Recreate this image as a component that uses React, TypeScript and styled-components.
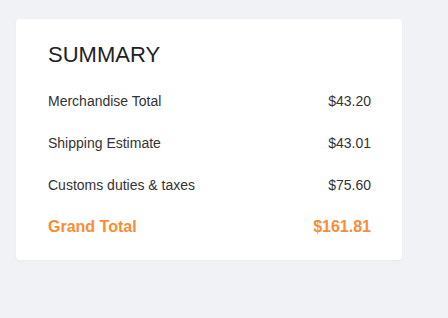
import styled, { createGlobalStyle } from "styled-components";

const GlobalStyle = createGlobalStyle`
  html, body {
    margin: 0;
    padding: 0;
    background: #f0f2f5;
    font-family: "Liberation Sans", Arial, sans-serif;
  }
`

const Page = styled.main`
  width: 448px;
  height: 318px;
  padding: 19px 0 0 16px;
  box-sizing: border-box;
`

const Card = styled.section`
  width: 386px;
  box-sizing: border-box;
  padding: 25px 31px 23px 32px;
  background: #ffffff;
  border-radius: 4px;
  box-shadow: 0 1px 3px rgba(0, 0, 0, 0.04);
  display: flex;
  flex-direction: column;
`

const Title = styled.h2`
  margin: 0 0 25px;
  font-size: 22px;
  line-height: 22px;
  font-weight: 400;
  color: #222222;
`

const List = styled.div`
  display: flex;
  flex-direction: column;
  gap: 22px;
`

const Row = styled.div<{ $total?: boolean }>`
  display: flex;
  justify-content: space-between;
  align-items: baseline;
  height: 20px;
  line-height: 20px;
  font-size: ${props => props.$total ? "16px" : "14px"};
  font-weight: ${props => props.$total ? 700 : 400};
  color: ${props => props.$total ? "#fa8c35" : "#333333"};
`

const rows = [
  { label: "Merchandise Total", value: "$43.20" },
  { label: "Shipping Estimate", value: "$43.01" },
  { label: "Customs duties & taxes", value: "$75.60" },
]

function App() {
  return (
    <>
      <GlobalStyle />
      <Page>
        <Card>
          <Title>SUMMARY</Title>
          <List>
            {rows.map(row => (
              <Row key={row.label}>
                <span>{row.label}</span>
                <span>{row.value}</span>
              </Row>
            ))}
            <Row $total>
              <span>Grand Total</span>
              <span>$161.81</span>
            </Row>
          </List>
        </Card>
      </Page>
    </>
  );
}

export default App
